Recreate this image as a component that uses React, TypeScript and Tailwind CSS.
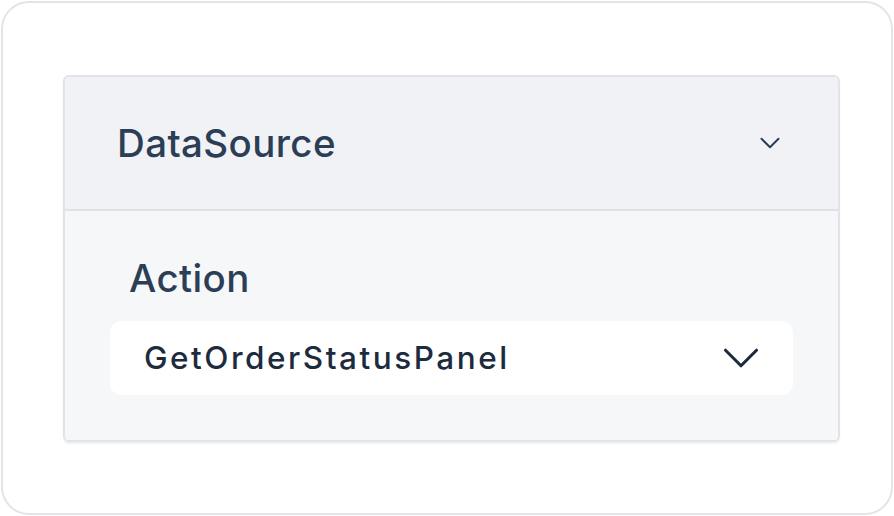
import { ChevronDown } from "lucide-react";

export default function App() {
  return (
    <div className="w-[894px] h-[516px] bg-white p-px" style={{ fontFamily: "Inter, 'Noto Sans', sans-serif" }}>
      <div className="h-full w-full rounded-[28px] border-2 border-[#e3e4e9] pl-[60px] pt-[72px]">
        <div className="w-[777px] overflow-hidden rounded-[6px] border-2 border-[#e1e3e8] shadow-[0_2px_2px_rgba(0,0,0,0.06)]">
          <div className="flex h-[134px] items-center justify-between border-b-2 border-[#dfe1e6] bg-[#f0f2f5] pl-[52px] pr-[51px]">
            <span className="text-[38.5px] leading-none font-medium tracking-[0.01em] text-[#2c3e55]">DataSource</span>
            <ChevronDown className="h-[34px] w-[34px] text-[#2c3e55]" strokeWidth={1.4} />
          </div>
          <div className="bg-[#f6f7f9] px-[45px] pt-[48px] pb-[45px]">
            <div className="pl-[19px] text-[38.5px] leading-none font-medium tracking-[0.01em] text-[#2c3e55]">Action</div>
            <div className="mt-[23px] flex h-[74px] items-center justify-between rounded-[12px] bg-white pl-[34px] pr-[21px]">
              <span className="text-[31.5px] leading-none font-medium tracking-[0.08em] text-[#1d2b3e]">GetOrderStatusPanel</span>
              <ChevronDown className="h-[62px] w-[62px] text-[#1d2b3e]" strokeWidth={1.2} />
            </div>
          </div>
        </div>
      </div>
    </div>
  );
}
